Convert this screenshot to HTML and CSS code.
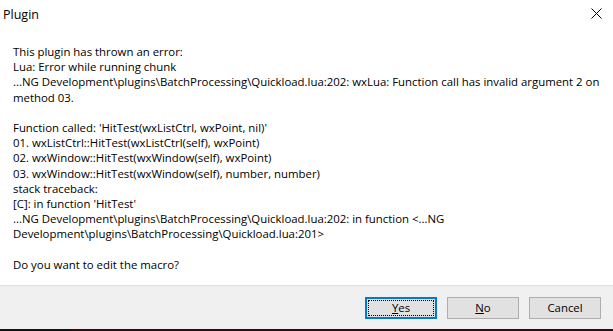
FILE: index.html
```html
<!DOCTYPE html>
<html>
<head>
	<meta charset="utf-8">
	<title>Plugin</title>
	<link rel="stylesheet" href="styles.css">
</head>
<body>
	<div class="dialog">
		<div class="titlebar">
			<span class="title">Plugin</span>
			<span class="close">
				<svg width="11" height="11" viewBox="0 0 11 11"><path d="M0.5 0.5L10.5 10.5M10.5 0.5L0.5 10.5" stroke="#000" stroke-width="1"/></svg>
			</span>
		</div>

		<div class="content">
			<p class="message">This plugin has thrown an error:<br>
Lua: Error while running chunk<br>
...NG Development\plugins\BatchProcessing\Quickload.lua:202: wxLua: Function call has invalid argument 2 on<br>
method 03.<br>
<br>
Function called: 'HitTest(wxListCtrl, wxPoint, nil)'<br>
01. wxListCtrl::HitTest(wxListCtrl(self), wxPoint)<br>
02. wxWindow::HitTest(wxWindow(self), wxPoint)<br>
03. wxWindow::HitTest(wxWindow(self), number, number)<br>
stack traceback:<br>
[C]: in function 'HitTest'<br>
...NG Development\plugins\BatchProcessing\Quickload.lua:202: in function &lt;...NG<br>
Development\plugins\BatchProcessing\Quickload.lua:201&gt;<br>
<br>
Do you want to edit the macro?</p>
		</div>

		<div class="footer">
			<button class="btn default"><span class="focus"><u>Y</u>es</span></button>
			<button class="btn"><u>N</u>o</button>
			<button class="btn">Cancel</button>
		</div>
	</div>
	<div class="taskbar">
		<div class="tb-left"></div>
		<div class="tb-right"></div>
	</div>
</body>
</html>
```

FILE: styles.css
```css
body{
	margin: 0px;
	padding: 0px;
	width: 613px;
	height: 331px;
	overflow: hidden;
	background: #fff;
	font-family: "Open Sans", "Noto Sans", sans-serif;
	font-size: 11.4px;
	color: #000;
	display: flex;
	flex-direction: column;
}

.dialog{
	height: 329px;
	display: flex;
	flex-direction: column;
	background: #fff;
}

.titlebar{
	height: 30px;
	display: flex;
	align-items: center;
	justify-content: space-between;
	padding: 0px 11px 0px 3px;
	box-sizing: border-box;
}

.title{
	font-size: 12.5px;
	margin-top: -2px;
}

.close{
	display: flex;
	margin-top: -4px;
}

.content{
	flex: 1;
	padding: 14px 13px 0px 13px;
}

.message{
	margin: 0px;
	line-height: 15.2px;
	white-space: nowrap;
}

.footer{
	height: 43px;
	background: #f0f0f0;
	border-top: 1px solid #dfdfdf;
	display: flex;
	align-items: center;
	justify-content: flex-end;
	gap: 10px;
	padding-right: 12px;
}

.btn{
	width: 72px;
	height: 22px;
	background: #e1e1e1;
	border: 1px solid #adadad;
	font-family: inherit;
	font-size: 11.4px;
	color: #000;
	padding: 0px;
	display: flex;
	align-items: center;
	justify-content: center;
}

.btn.default{
	border-color: #0078d7;
	box-shadow: inset 0px 0px 0px 1px #0078d7;
	padding: 3px;
}

.focus{
	flex: 1;
	align-self: stretch;
	display: flex;
	align-items: center;
	justify-content: center;
	outline: 1px dotted #000;
}

.taskbar{
	height: 2px;
	display: flex;
}

.tb-left{
	width: 70px;
	background: #121212;
}

.tb-right{
	flex: 1;
	background: #2c0b0d;
}
```
